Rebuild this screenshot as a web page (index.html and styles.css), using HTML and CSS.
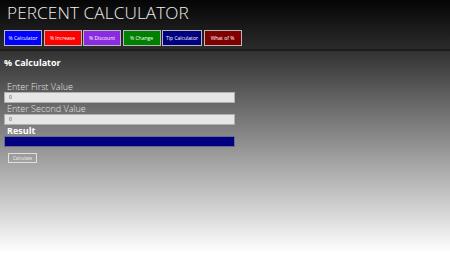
FILE: index.html
```html
<!DOCTYPE html>
<html lang="en">
<head>
  <meta charset="UTF-8" />
  <title>Percent Calculator</title>
  <link rel="stylesheet" href="styles.css">
</head>
<body>

  <header>
    <h1>PERCENT CALCULATOR</h1>
    <nav class="tabs">
      <button class="tab tab-blue">% Calculator</button>
      <button class="tab tab-red">% Increase</button>
      <button class="tab tab-purple">% Discount</button>
      <button class="tab tab-green">% Change</button>
      <button class="tab tab-navy">Tip Calculator</button>
      <button class="tab tab-maroon">What of %</button>
    </nav>
  </header>

  <main>
    <h2>% Calculator</h2>

    <div class="form">
      <label class="field-label">Enter First Value</label>
      <div class="input">0</div>
      <label class="field-label">Enter Second Value</label>
      <div class="input">0</div>
      <div class="result-label">Result</div>
      <div class="result"></div>
      <button class="calc-btn">Calculate</button>
    </div>
  </main>

</body>
</html>
```

FILE: styles.css
```css
* {
  box-sizing: border-box;
  margin: 0;
  padding: 0;
}

html, body {
  height: 100%;
  font-family: 'Open Sans', 'Noto Sans', sans-serif;
}

body {
  display: flex;
  flex-direction: column;
  background: #fff;
}

header {
  height: 51px;
  padding: 1px 4px 0;
  background: linear-gradient(#050505, #2b2b2b);
  border-bottom: 2px solid #1d1d1d;
}

h1 {
  font-size: 17.2px;
  font-weight: 300;
  color: #f0f0f0;
  letter-spacing: 0.1px;
  padding-left: 3px;
  line-height: 24px;
}

.tabs {
  display: flex;
  gap: 1.5px;
  margin-top: 5px;
}

.tab {
  width: 38px;
  height: 16px;
  border: 1px solid #b8b8b8;
  color: white;
  font-family: inherit;
  font-size: 5px;
  cursor: pointer;
}

.tab-blue { background: #0000ff; }
.tab-red { background: #ff0000; }
.tab-purple { background: #8a2be2; }
.tab-green { background: #008000; }
.tab-navy { background: #000080; width: 40px; }
.tab-maroon { background: #800000; }

main {
  flex: 1;
  padding: 6px 4px 0;
  background: linear-gradient(#323232, #ffffff);
}

h2 {
  font-size: 9px;
  font-weight: 700;
  color: white;
  line-height: 12px;
}

.form {
  margin-top: 13px;
  width: 231px;
  display: flex;
  flex-direction: column;
}

.field-label {
  font-size: 9px;
  font-weight: 300;
  color: #e4e4e4;
  padding-left: 3px;
  line-height: 10px;
}

.input {
  height: 11px;
  background: #e6e6e6;
  border: 1px solid #b0b0b0;
  font-size: 5px;
  line-height: 9px;
  padding-left: 4px;
  color: #444;
  margin-bottom: 1px;
}

.result-label {
  font-size: 9px;
  font-weight: 700;
  color: white;
  padding-left: 3px;
  line-height: 10px;
}

.result {
  height: 11px;
  background: #000080;
  border: 1px solid #6a6a8a;
}

.calc-btn {
  align-self: flex-start;
  margin: 6px 0 0 4px;
  width: 29px;
  height: 10px;
  border: 1px solid #e0e0e0;
  background: transparent;
  color: #eee;
  font-family: inherit;
  font-size: 4.5px;
}
```
